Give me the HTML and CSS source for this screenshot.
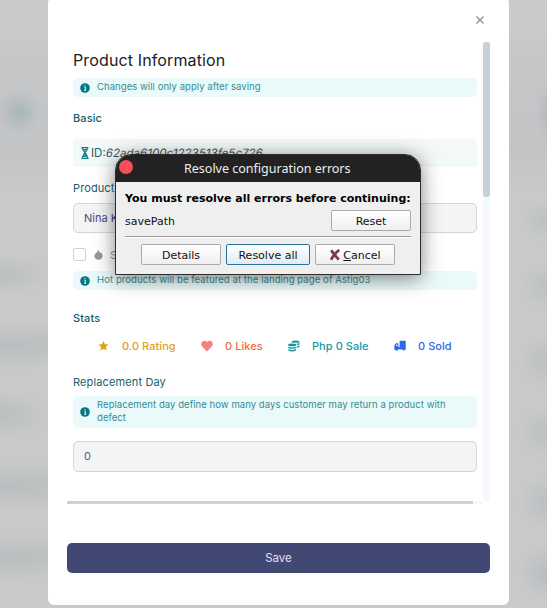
FILE: index.html
```html
<!DOCTYPE html>
<html lang="en">
<head>
<meta charset="utf-8">
<title>Product Information</title>
<link rel="stylesheet" href="styles.css">
</head>
<body>
<main class="modal">
  <header class="modal-head">
    <svg class="close" viewBox="0 0 8 8"><path d="M.5 .5L7.5 7.5M7.5 .5L.5 7.5"/></svg>
  </header>
  <div class="scroller">
    <section class="content">
      <h1>Product Information</h1>
      <div class="note">
        <svg class="info" viewBox="0 0 10 10"><circle cx="5" cy="5" r="4.8"/><path d="M4.3 4.2H5.3V7.2M4.1 7.3H6.1M4.5 2.7H5.5"/></svg>
        <span>Changes will only apply after saving</span>
      </div>
      <h2 class="basic">Basic</h2>
      <div class="id-box">
        <svg class="dna" viewBox="0 0 8 12"><path d="M.3 .7H7.5M1.4 .7C1.2 4 6.8 7 6.6 11.3M6.6 .7C6.8 4 1.2 7 1.4 11.3M1.8 2.5H6.2M1.8 9.4H6.2M.5 11.3H7.7M3 4.2H5M3 7.8H5"/></svg>
        <span class="id-label">ID:</span><span class="id-value">62ada6100c1223513fe5c726</span>
      </div>
      <label class="name-label">Product Name</label>
      <div class="field name-field">Nina K</div>
      <div class="check-row">
        <span class="box"></span>
        <svg class="flame" viewBox="0 0 9 12"><path d="M4.3 .5C4.6 2.6 6 3.3 6.6 4.5L7.2 3.6C8.2 5 9 6 9 7.6C9 10 7 11.6 4.5 11.6S0 10 0 7.6C0 4.8 3.6 4 4.3 .5Z"/></svg>
        <span>Set as Hot</span>
      </div>
      <div class="note">
        <svg class="info" viewBox="0 0 10 10"><circle cx="5" cy="5" r="4.8"/><path d="M4.3 4.2H5.3V7.2M4.1 7.3H6.1M4.5 2.7H5.5"/></svg>
        <span class="wide">Hot products will be featured at the landing page of Astig03</span>
      </div>
      <h2 class="stats-title">Stats</h2>
      <div class="stats">
        <span class="stat rating"><svg viewBox="0 0 12 12"><path d="M6.5 1L8 4.2L11.5 4.6L8.9 7L9.6 10.5L6.5 8.8L3.4 10.5L4.1 7L1.5 4.6L5 4.2Z"/></svg><b>0.0 Rating</b></span>
        <span class="stat likes"><svg viewBox="0 0 12 12"><path d="M6 11.5L.9 6.3C-1.6 2.6 2.8-1.2 6 1.9C9.2-1.2 13.6 2.6 11.1 6.3Z"/></svg><b>0 Likes</b></span>
        <span class="stat sale"><svg viewBox="0 0 12 12"><path d="M3.5 1.2Q7.5-.2 11.6 1.2V2.2Q8 3.3 3.5 2.2ZM9 3.8L11.6 3V4.5L9 5.3ZM9 6.3L11.6 5.5V7L9 7.8Z"/><ellipse cx="4.2" cy="4.9" rx="4.1" ry="1.4"/><path d="M.1 6.7Q4.2 8.2 8.3 6.7V8Q4.2 9.7 .1 8ZM.3 9.1Q4.2 10.8 8.1 9.1V10.6Q4.2 12.6 .3 10.6Z"/></svg><b>Php 0 Sale</b></span>
        <span class="stat sold"><svg viewBox="0 0 12 12"><path d="M5.6 .8H11.7V9.6H11.2A1.5 1.5 0 0 1 8.4 9.6L4.2 9.2A1.5 1.5 0 0 1 1.3 9.8L.3 9.4V5.6L2 3.3H4.3V7H5.6Z"/><path class="hole" d="M1.6 6L2.7 4.4H3.3V6Z"/></svg><b>0 Sold</b></span>
      </div>
      <label class="day-label">Replacement Day</label>
      <div class="note tall">
        <svg class="info" viewBox="0 0 10 10"><circle cx="5" cy="5" r="4.8"/><path d="M4.3 4.2H5.3V7.2M4.1 7.3H6.1M4.5 2.7H5.5"/></svg>
        <span>Replacement day define how many days customer may return a product with<br>defect</span>
      </div>
      <div class="field day-field">0</div>
    </section>
    <div class="vbar"><i></i></div>
    <div class="hbar"><i></i></div>
  </div>
  <button class="save">Save</button>
</main>

<div class="dialog">
  <div class="titlebar"><i class="dot"></i><span>Resolve configuration errors</span></div>
  <div class="dialog-body">
    <strong>You must resolve all errors before continuing:</strong>
    <div class="error-row"><span>savePath</span><button class="btn">Reset</button></div>
    <hr>
    <div class="actions">
      <button class="btn">Details</button>
      <button class="btn primary">Resolve all</button>
      <button class="btn"><svg class="cross" viewBox="0 0 12 12"><path d="M2.2 1.2Q5 5.5 9.8 10.6M10.2 1Q5.5 4.5 2 10.8"/></svg><span><u>C</u>ancel</span></button>
    </div>
  </div>
</div>
</body>
</html>
```
FILE: styles.css
```css
* { box-sizing: border-box; }
body {
  margin: 0;
  width: 547px;
  height: 608px;
  overflow: hidden;
  font-family: Inter, "Liberation Sans", sans-serif;
  font-size: 11px;
  color: #17606d;
  background:
    radial-gradient(circle at 19px 112px, #a6b6b7 0, #a6b6b780 10px, transparent 22px),
    radial-gradient(ellipse 16px 30px at 552px 113px, #b4b4ba, transparent),
    radial-gradient(ellipse 32px 22px at 552px 220px, #b8c0c2, transparent),
    radial-gradient(ellipse 32px 22px at 552px 287px, #b8c0c2, transparent),
    radial-gradient(ellipse 32px 26px at 550px 361px, #bac0c2, transparent),
    radial-gradient(ellipse 32px 26px at 550px 432px, #bac0c2, transparent),
    radial-gradient(ellipse 32px 26px at 550px 502px, #b7bfc2, transparent),
    radial-gradient(ellipse 32px 28px at 550px 573px, #b4bdc0, transparent),
    radial-gradient(ellipse 54px 20px at 0 275px, #babfc0, transparent),
    radial-gradient(ellipse 120px 24px at 10px 345px, #b8bebf, transparent),
    radial-gradient(ellipse 54px 24px at 0 415px, #babfc0, transparent),
    radial-gradient(ellipse 120px 24px at 10px 486px, #b8bebf, transparent),
    radial-gradient(ellipse 120px 24px at 10px 557px, #b8bebf, transparent),
    linear-gradient(#cbcbcb 0, #cacaca 28px, #c5c6c8 65px, #c3c4c6 150px, #c9c9c9 190px, #c9c9c9 100%);
}
h1, h2 { margin: 0; font-weight: 500; }
.modal {
  display: flex;
  flex-direction: column;
  width: 461px;
  height: 608px;
  margin: -3px 0 0 48px;
  padding: 0 19px;
  background: #fff;
  border-radius: 6px;
}
.modal-head { display: flex; justify-content: flex-end; height: 45px; padding: 19px 6px 0 0; }
.close { width: 8px; height: 8px; stroke: #888; stroke-width: 1.2; fill: none; }
.scroller {
  display: grid;
  grid-template: 459px 3px / 416px 7px;
  height: 462px;
}
.content { display: flex; flex-direction: column; padding: 0 6px; }
h1 { height: 36px; line-height: 37px; font-size: 16px; font-weight: 400; letter-spacing: .13px; color: #1c2028; white-space: nowrap; }
.note {
  display: flex;
  align-items: center;
  flex: none;
  height: 19px;
  padding: 0 0 1px 7px;
  gap: 7px;
  border-radius: 5px;
  background: #eaf9f9;
  color: #358c96;
  font-size: 9.5px;
  letter-spacing: .06px;
  line-height: 13px;
  white-space: nowrap;
}
.note span { margin-top: -1px; }
.note .wide { letter-spacing: .09px; }
.note.tall { height: 32px; }
.info { width: 10px; height: 10px; flex: none; margin-top: 1px; fill: #077586; }
.info path { stroke: #eaf9f9; fill: none; stroke-width: 1; }
h2 { font-size: 11px; }
.basic { height: 42px; line-height: 42px; letter-spacing: .1px; }
.id-box { display: flex; align-items: center; height: 28px; padding-left: 8px; border-radius: 3px; background: #f3f9f8; white-space: nowrap; }
.dna { width: 8px; height: 12px; margin-right: 2px; fill: none; stroke: #17808b; stroke-width: 1.2; }
.id-label { font-size: 11.5px; }
.id-value { font-size: 11.5px; letter-spacing: .04px; color: #46535a; transform: skewX(-10deg); }
.name-label { height: 36px; line-height: 42px; letter-spacing: .1px; }
.field {
  flex: none;
  height: 31px;
  line-height: 29px;
  padding-left: 10px;
  border: 1px solid #d4d5d8;
  border-radius: 5px;
  background: #f3f4f6;
  color: #4a4a80;
}
.name-field { height: 30px; line-height: 28px; }
.check-row { display: flex; align-items: center; height: 38px; padding-top: 5px; color: #999; }
.box { width: 13px; height: 13px; border: 1px solid #d0d0d0; border-radius: 2px; }
.flame { width: 9px; height: 11px; margin: 0 7px 0 8px; fill: #999; }
.stats-title { height: 46px; line-height: 57px; letter-spacing: .1px; }
.stats { display: flex; height: 20px; padding-left: 24px; }
.stat { display: flex; align-items: center; white-space: nowrap; }
.stat svg { width: 12px; height: 12px; margin-right: 13px; fill: currentColor; }
.stat b { font-weight: 500; letter-spacing: .06px; }
.rating { width: 103.5px; color: #e0a115; }
.likes { width: 87px; color: #f36a41; }
.likes svg { fill: #fa7f80; }
.likes svg, .sale svg, .sold svg { margin-right: 12.5px; }
.sale { width: 106px; color: #1298a5; }
.sold { color: #2e66ee; }
.stat .hole { fill: #fff; }
.day-label { height: 40px; line-height: 52px; letter-spacing: .13px; }
.day-field { margin-top: 13px; color: #4d627b; }
.vbar { background: #f5f9fd; }
.vbar i { display: block; height: 155px; border-radius: 3px; background: #c4d1d7; }
.hbar { background: #f5f9fd; }
.hbar i { display: block; width: 406px; height: 3px; border-radius: 1px; background: #c4d3d6; }
.save {
  height: 30px;
  margin-top: 39px;
  padding: 0;
  border: 0;
  border-radius: 5px;
  background: #424874;
  color: #e4def5;
  font: 11.5px Inter, sans-serif;
}
.dialog {
  position: absolute;
  left: 115px;
  top: 154px;
  width: 306px;
  height: 121px;
  border: 1px solid #2c2c2c;
  border-radius: 16px 16px 0 0;
  background: #efefef;
  overflow: hidden;
  box-shadow: 0 3px 20px rgba(0, 0, 0, .5);
  font: 11px "DejaVu Sans", sans-serif;
  color: #111;
}
.titlebar { display: flex; align-items: center; height: 27px; padding-left: 3px; background: #222; color: #eee; font: 12.5px "Noto Sans", sans-serif; white-space: nowrap; }
.dot { width: 14px; height: 14px; margin: -3px 51px 0 0; border-radius: 50%; background: #f64f57; }
.dialog-body { padding: 9px 9px 0; }
.dialog strong { display: block; height: 19px; line-height: 15px; font-size: 11px; white-space: nowrap; color: #000; }
.error-row { display: flex; justify-content: space-between; height: 21px; line-height: 24px; }
.btn {
  display: flex;
  align-items: center;
  justify-content: center;
  width: 80px;
  height: 21px;
  padding: 1px 0 0;
  border: 1px solid #aaa;
  border-radius: 2px;
  background: linear-gradient(#fff, #efefef);
  font: 11px "DejaVu Sans", sans-serif;
  color: #111;
  white-space: nowrap;
}
.btn.primary { width: 84px; border-color: #26739f; background: linear-gradient(#fff, #e2ebf0); }
.dialog hr { height: 2px; margin: 5px 0 6px; border: 0; border-top: 1px solid #999; background: #fff; }
.actions { display: flex; gap: 5px; padding-left: 16px; }
.cross { width: 12px; height: 12px; margin-right: 2px; fill: none; stroke: #853842; stroke-width: 2.8; }
```
